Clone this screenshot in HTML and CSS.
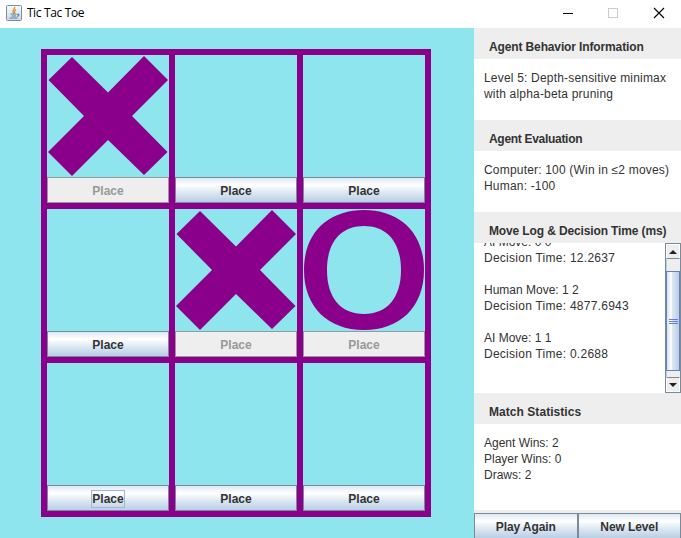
FILE: index.html
```html
<!DOCTYPE html>
<html lang="en">
<head>
<meta charset="utf-8">
<title>Tic Tac Toe</title>
<link rel="stylesheet" href="styles.css">
</head>
<body>
<svg width="0" height="0" class="defs">
  <symbol id="cross" viewBox="0 0 122 122">
    <path d="M25 2 61 37.500 97 1 121 25 85 61 120.500 97 97 120 61 85 25 121 1 97 37 61 1.500 25Z"/>
  </symbol>
  <symbol id="ring" viewBox="0 0 122 122">
    <path fill-rule="evenodd" d="M61 1C97 1 121 24 121 61S97 121 61 121 1 98 1 61 25 1 61 1ZM61 17C38 17 24 33 24 61S38 105 61 105 98 89 98 61 84 17 61 17Z"/>
  </symbol>
</svg>
<header class="titlebar">
  <svg class="app-icon" width="16" height="16" viewBox="0 0 16 16">
    <defs><linearGradient id="tile" x2="0" y2="1"><stop offset="0" stop-color="#fafbfb"/><stop offset="1" stop-color="#cbd7df"/></linearGradient></defs>
    <rect x=".5" y=".5" width="15" height="15" rx="1" fill="url(#tile)" stroke="#7590a4"/>
    <path d="M8.500 2C9.500 4 5.500 4.500 7.500 8M10 4.500C7.500 6 9.500 6.500 8 8.500" fill="none" stroke="#e98324" stroke-width="1.300"/>
    <path d="M4.500 9h6M5.500 11h4.500M3.500 13h8M11 9.500c3-1 2 1.500 0 2" fill="none" stroke="#55809f" stroke-width="1.100"/>
  </svg>
  <span class="title">Tic Tac Toe</span>
  <svg class="controls" width="103" height="12" viewBox="0 0 103 12" fill="none">
    <path d="M0 6.500h10" stroke="#000"/>
    <rect x="45.500" y="1.500" width="9" height="9" stroke="#ccc"/>
    <path d="M91 1l10 10M101 1l-10 10" stroke="#000" stroke-width="1.100"/>
  </svg>
</header>
<div class="window">
  <main class="playfield">
    <div class="board">
      <div class="cell"><svg class="mark"><use href="#cross"/></svg><button class="btn" disabled>Place</button></div>
      <div class="cell"><div class="mark"></div><button class="btn">Place</button></div>
      <div class="cell"><div class="mark"></div><button class="btn">Place</button></div>
      <div class="cell"><div class="mark"></div><button class="btn">Place</button></div>
      <div class="cell"><svg class="mark"><use href="#cross"/></svg><button class="btn" disabled>Place</button></div>
      <div class="cell"><svg class="mark"><use href="#ring"/></svg><button class="btn" disabled>Place</button></div>
      <div class="cell"><div class="mark"></div><button class="btn"><span class="focused">Place</span></button></div>
      <div class="cell"><div class="mark"></div><button class="btn">Place</button></div>
      <div class="cell"><div class="mark"></div><button class="btn">Place</button></div>
    </div>
  </main>
  <aside class="sidebar">
    <h2 class="heading">Agent Behavior Information</h2>
    <div class="info wide"><p>Level 5: Depth-sensitive minimax</p><p>with alpha-beta pruning</p></div>
    <h2 class="heading tight">Agent Evaluation</h2>
    <div class="info wide"><p>Computer: 100 (Win in ≤2 moves)</p><p>Human: -100</p></div>
    <h2 class="heading">Move Log &amp; Decision Time (ms)</h2>
    <div class="log">
      <div class="log-text"><p>AI Move: 0 0</p><p class="time">Decision Time: 12.2637</p><p class="move">Human Move: 1 2</p><p class="time">Decision Time: 4877.6943</p><p class="move">AI Move: 1 1</p><p class="time">Decision Time: 0.2688</p></div>
      <div class="scrollbar">
        <div class="arrow up"></div>
        <div class="track"><div class="thumb"><i></i><i></i><i></i></div></div>
        <div class="arrow down"></div>
      </div>
    </div>
    <h2 class="heading loose">Match Statistics</h2>
    <div class="info stats"><p>Agent Wins: 2</p><p>Player Wins: 0</p><p>Draws: 2</p></div>
    <div class="actions"><button class="btn action">Play Again</button><button class="btn action">New Level</button></div>
  </aside>
</div>
</body>
</html>
```
FILE: styles.css
```css
* { box-sizing: border-box; }
body {
  margin: 0;
  width: 681px;
  height: 538px;
  overflow: hidden;
  font: 12px/16px "Liberation Sans", Arial, sans-serif;
  color: #333;
  background: #fff;
}
p { margin: 0; }
.defs { display: none; }
.titlebar { display: flex; align-items: center; height: 28px; padding: 0 15px 3px 6px; }
.title { flex: 1; margin-left: 5px; font: 12px/16px "Open Sans", "Noto Sans", sans-serif; letter-spacing: -0.5px; word-spacing: 0.6px; color: #000; }
.window { display: flex; height: 510px; }
.playfield { width: 474px; padding: 21px 0 0 41px; background: #8fe5ee; }
.board {
  display: grid;
  grid-template-columns: repeat(3, 122px);
  grid-template-rows: repeat(3, 148px);
  gap: 6px;
  width: 390px;
  padding: 6px;
  background: #8b008b;
}
.cell { display: flex; flex-direction: column; background: #8fe5ee; }
.mark { display: block; width: 122px; height: 122px; fill: #8b008b; }
.btn {
  display: flex;
  align-items: center;
  justify-content: center;
  height: 26px;
  margin: 0;
  padding: 1px 0 0;
  border: 1px solid #7a8a99;
  border-radius: 0;
  color: #333;
  font: bold 12px/16px "Liberation Sans", Arial, sans-serif;
  background: linear-gradient(#dde8f3 0%, #fff 30%, #dde8f3 60%, #b8cfe5 100%);
}
.btn:disabled { color: #999; background: #eee; border-color: #999; }
.focused { height: 18px; border: 1px solid #a3b8cc; }
.sidebar { display: flex; flex-direction: column; width: 207px; background: #fff; }
.heading { height: 31px; margin: 0; padding: 11px 0 0 15px; background: #eee; font-size: 12px; line-height: 16px; white-space: nowrap; letter-spacing: -0.13px; }
.tight { letter-spacing: -0.3px; }
.loose { letter-spacing: 0.05px; }
.info { height: 61px; padding: 11px 0 0 10px; white-space: nowrap; }
.wide { letter-spacing: 0.19px; }
.stats { height: 86px; }
.log { display: flex; height: 150px; overflow: hidden; }
.log-text { flex: 1; margin-top: -9px; padding-left: 10px; white-space: nowrap; }
.time { letter-spacing: 0.26px; }
.move { margin-top: 16px; }
.scrollbar { display: flex; flex-direction: column; width: 16px; height: 150px; border: 1px solid #7a8a99; background: #eee; }
.arrow { display: flex; align-items: center; justify-content: center; height: 15px; border: 1px solid #fff; }
.up { border-bottom-color: #7a8a99; }
.down { border-top-color: #7a8a99; }
.arrow::before { content: ""; border: 4px solid transparent; }
.up::before { border-top: 0; border-bottom-color: #222; }
.down::before { border-bottom: 0; border-top-color: #222; }
.track { flex: 1; padding: 12px 0 6px; border-left: 1px solid #b8cfe5; }
.thumb {
  display: flex;
  flex-direction: column;
  align-items: center;
  justify-content: center;
  gap: 1px;
  height: 100%;
  margin-left: -1px;
  border: 1px solid #6382bf;
  background: linear-gradient(90deg, #d4e2ef, #fff 35%, #dce7f2 45%, #b8cfe5);
}
.thumb i { width: 9px; height: 1px; background: #6382bf; }
.actions { display: flex; height: 28px; padding-top: 3px; background: #eee; }
.action { height: 26px; flex: 1; padding-top: 2px; letter-spacing: -0.1px; }
```
